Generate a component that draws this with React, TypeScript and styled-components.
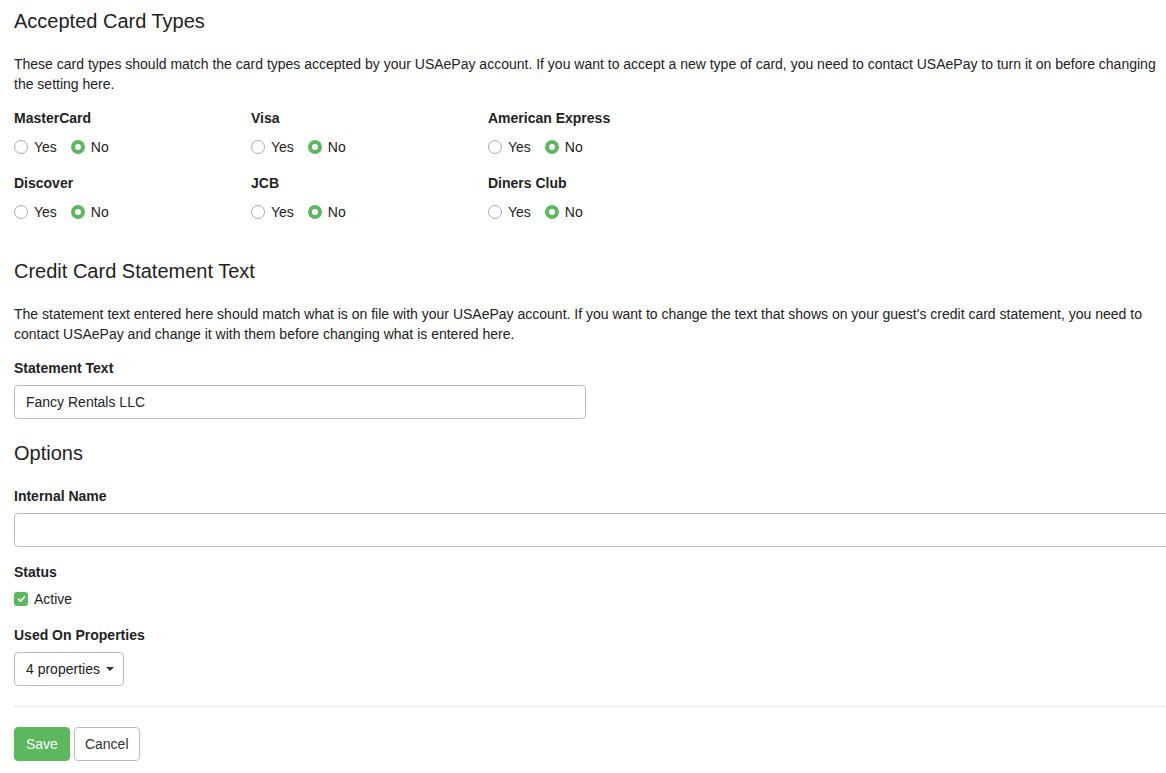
import React from "react";
import styled, { createGlobalStyle } from "styled-components";

const Global = createGlobalStyle`
  html, body { margin: 0; padding: 0; background: #fff; overflow: hidden; }
  body { font-family: "Liberation Sans", Arial, sans-serif; font-size: 14px; color: #222; }
  * { box-sizing: border-box; }
`;

const Page = styled.div`
  width: 1174px;
  padding: 10px 0 0 14px;
`;

const Heading = styled.h2<{ $top?: number }>`
  margin: ${(p) => p.$top ?? 0}px 0 22px;
  font-size: 20px;
  font-weight: normal;
  line-height: 22px;
  color: #222;
`;

const Para = styled.p`
  margin: 0 0 14px;
  line-height: 20px;
  color: #222;
`;

const CardGrid = styled.div`
  display: grid;
  grid-template-columns: 237px 237px 237px;
  row-gap: 16px;
`;

const Group = styled.div`
  display: flex;
  flex-direction: column;
`;

const Label = styled.div<{ $gap?: number }>`
  font-weight: bold;
  line-height: 20px;
  margin-bottom: ${(p) => p.$gap ?? 8}px;
  color: #222;
`;

const RadioRow = styled.div`
  display: flex;
  align-items: center;
  height: 21px;
  gap: 14px;
`;

const Choice = styled.label`
  display: flex;
  align-items: center;
  gap: 6px;
  line-height: 20px;
  color: #222;
`;

const Radio = styled.span<{ $on?: boolean }>`
  width: 14px;
  height: 14px;
  border-radius: 50%;
  border: ${(p) => (p.$on ? "4px solid #5cb85c" : "1px solid #a9adb1")};
  background: #fff;
  display: inline-block;
  flex: none;
`;

const Input = styled.div<{ $width?: string }>`
  width: ${(p) => p.$width ?? "100%"};
  height: 34px;
  border: 1px solid #b8bcc1;
  border-radius: 4px;
  padding: 0 11px;
  display: flex;
  align-items: center;
  color: #222;
`;

const Field = styled.div<{ $bottom?: number }>`
  display: flex;
  flex-direction: column;
  margin-bottom: ${(p) => p.$bottom ?? 0}px;
`;

const CheckRow = styled.label`
  display: flex;
  align-items: center;
  gap: 6px;
  height: 20px;
`;

const CheckBox = styled.span`
  width: 14px;
  height: 14px;
  border-radius: 3px;
  background: #5cb85c;
  display: inline-flex;
  align-items: center;
  justify-content: center;
`;

const Dropdown = styled.div`
  width: 110px;
  height: 34px;
  border: 1px solid #b8bcc1;
  border-radius: 4px;
  padding: 0 9px 0 11px;
  display: flex;
  align-items: center;
  justify-content: space-between;
  color: #222;
`;

const Caret = styled.span`
  width: 0;
  height: 0;
  border-left: 4px solid transparent;
  border-right: 4px solid transparent;
  border-top: 4px solid #333;
`;

const Rule = styled.hr`
  border: 0;
  border-top: 1px solid #e3e4e6;
  margin: 20px 0 20px;
  width: 1152px;
`;

const Actions = styled.div`
  display: flex;
  gap: 4px;
`;

const Button = styled.button<{ $primary?: boolean }>`
  height: 34px;
  padding: 0 ${(p) => (p.$primary ? 11 : 10)}px;
  font: inherit;
  font-size: 14px;
  border-radius: 4px;
  border: 1px solid ${(p) => (p.$primary ? "#5cb85c" : "#b8bcc1")};
  background: ${(p) => (p.$primary ? "#5cb85c" : "#fff")};
  color: ${(p) => (p.$primary ? "#fff" : "#333")};
`;

const cards = ["MasterCard", "Visa", "American Express", "Discover", "JCB", "Diners Club"];

export default function App() {
  return (
    <>
      <Global />
      <Page>
        <Heading>Accepted Card Types</Heading>
        <Para>
          These card types should match the card types accepted by your USAePay account. If you want to accept a new type of card, you need to contact USAePay to turn it on before changing the setting here.
        </Para>
        <CardGrid>
          {cards.map((c) => (
            <Group key={c}>
              <Label>{c}</Label>
              <RadioRow>
                <Choice>
                  <Radio />
                  Yes
                </Choice>
                <Choice>
                  <Radio $on />
                  No
                </Choice>
              </RadioRow>
            </Group>
          ))}
        </CardGrid>

        <Heading $top={38}>Credit Card Statement Text</Heading>
        <Para>
          The statement text entered here should match what is on file with your USAePay account. If you want to change the text that shows on your guest's credit card statement, you need to contact USAePay and change it with them before changing what is entered here.
        </Para>
        <Field>
          <Label $gap={7}>Statement Text</Label>
          <Input $width="572px">Fancy Rentals LLC</Input>
        </Field>

        <Heading $top={23}>Options</Heading>
        <Field $bottom={15}>
          <Label $gap={7}>Internal Name</Label>
          <Input />
        </Field>
        <Field $bottom={16}>
          <Label $gap={7}>Status</Label>
          <CheckRow>
            <CheckBox>
              <svg width="9" height="8" viewBox="0 0 9 8">
                <path d="M1.5 4.2 L3.6 6.2 L7.6 1.8" stroke="#fff" strokeWidth="1.6" fill="none" strokeLinecap="round" strokeLinejoin="round" />
              </svg>
            </CheckBox>
            Active
          </CheckRow>
        </Field>
        <Field>
          <Label $gap={7}>Used On Properties</Label>
          <Dropdown>
            4 properties
            <Caret />
          </Dropdown>
        </Field>
        <Rule />
        <Actions>
          <Button $primary>Save</Button>
          <Button>Cancel</Button>
        </Actions>
      </Page>
    </>
  );
}
